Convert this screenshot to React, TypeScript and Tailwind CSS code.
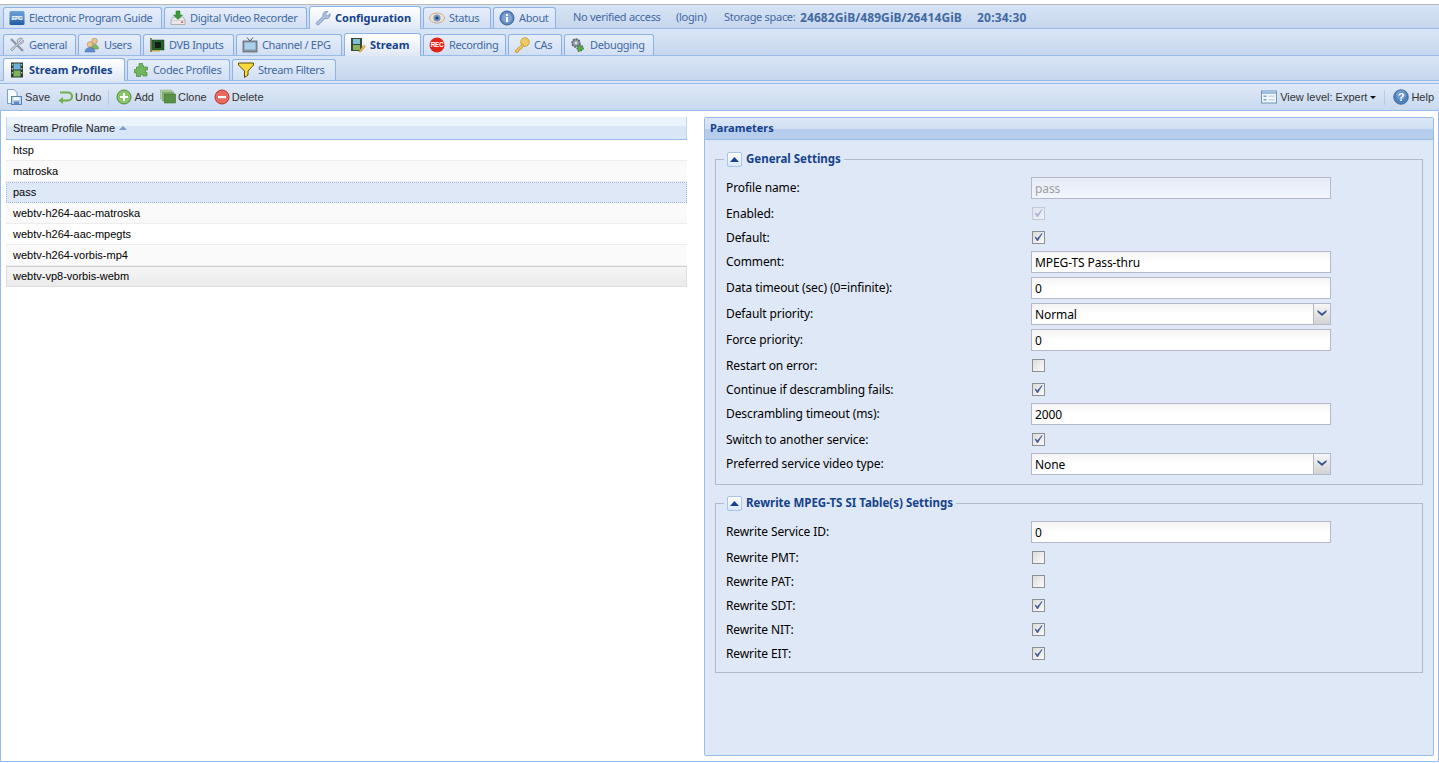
import React from "react";

function I({ children }: { children: React.ReactNode }) {
  return <svg width="16" height="16" viewBox="0 0 16 16" className="shrink-0">{children}</svg>;
}

const Icons: Record<string, React.ReactNode> = {
  epg: <I><defs><linearGradient id="epgg" x1="0" y1="0" x2="0" y2="1"><stop offset="0" stopColor="#6ea5dd" /><stop offset="1" stopColor="#1f5aa0" /></linearGradient></defs><rect x="0.500" y="1" width="15" height="14" rx="1.500" fill="url(#epgg)" /><rect x="1.500" y="5.500" width="13" height="4.500" fill="#dbe9f7" opacity="0.250" /><text x="8" y="10" textAnchor="middle" fontSize="5.500" fontWeight="700" fontStyle="italic" fill="#fff" fontFamily="Liberation Sans, sans-serif">EPG</text></I>,
  dvr: <I><path d="M1 10 L3 7 H13 L15 10 V14.500 H1Z" fill="#e9e9e9" stroke="#999" strokeWidth="0.700" /><path d="M1 10.500H15" stroke="#bbb" strokeWidth="0.500" /><rect x="11" y="11.500" width="2.200" height="1.200" fill="#d33" /><path d="M6 1h4v4h2.500L8 9.500 3.500 5H6z" fill="#3c9a35" stroke="#2a7525" strokeWidth="0.500" /></I>,
  config: <I><path d="M15 3.500 L12.500 6 L10.500 4 L13 1.500 A4 4 0 0 0 8 6.500 L1.500 12.500 A1.600 1.600 0 0 0 3.700 14.700 L10 8.600 A4 4 0 0 0 15 3.500Z" fill="#a9c0de" stroke="#6d8bb5" strokeWidth="0.700" /></I>,
  status: <I><ellipse cx="8" cy="8" rx="7.500" ry="5" fill="#f3e4d2" stroke="#b98f68" strokeWidth="0.700" /><circle cx="8" cy="8" r="3.600" fill="#6f97c8" /><circle cx="8" cy="8" r="1.600" fill="#24456f" /></I>,
  about: <I><circle cx="8" cy="8" r="7" fill="#5e88bf" stroke="#3e6497" /><circle cx="8" cy="8" r="5" fill="#7ea4d3" /><rect x="7" y="7" width="2" height="5" fill="#fff" /><rect x="7" y="4" width="2" height="2" fill="#fff" /></I>,
  general: <I><path d="M2 2 L14 14" stroke="#8d99a6" strokeWidth="2.400" /><path d="M13.500 1.500 L10.500 4.500 L11.500 5.500 L14.500 3 A3.500 3.500 0 0 1 10 7 L3 14 L1.500 12.500 L8.500 6 A3.500 3.500 0 0 1 13.500 1.500Z" fill="#c4ccd4" stroke="#7b8794" strokeWidth="0.600" /></I>,
  users: <I><circle cx="10.500" cy="4" r="2.800" fill="#e9c28e" stroke="#a97f4b" strokeWidth="0.500" /><path d="M6.500 12c0-3 2-4.500 4-4.500s4 1.500 4 4.500z" fill="#7db563" stroke="#5c8d44" strokeWidth="0.500" /><circle cx="6" cy="7.500" r="2.800" fill="#eac497" stroke="#a97f4b" strokeWidth="0.500" /><path d="M1 15c0-3 2.500-4.500 5-4.500S11 12 11 15z" fill="#5f8fd0" stroke="#436da6" strokeWidth="0.500" /></I>,
  dvb: <I><rect x="1" y="1" width="2" height="14" fill="#8a8a5e" /><rect x="3" y="3" width="12" height="10" fill="#25602f" stroke="#17401f" strokeWidth="0.500" /><rect x="6" y="5" width="6" height="6" fill="#141d16" /><rect x="3" y="13" width="8" height="1.500" fill="#c9a94b" /></I>,
  channel: <I><path d="M5 0.500 L8 4 L11 0.500" stroke="#555" fill="none" /><rect x="1" y="4" width="14" height="11" fill="#8a94a0" stroke="#4f5761" strokeWidth="0.700" /><rect x="2.500" y="5.500" width="11" height="7" fill="#a8d2ee" /></I>,
  stream: <I><rect x="1" y="1" width="11" height="13" fill="#3a4a3a" /><rect x="3" y="2" width="7" height="5" fill="#7fbfdc" /><rect x="3" y="8" width="7" height="5" fill="#86b45a" /><path d="M9 14 L14 8 L15.500 9.500 L10.500 15 H9Z" fill="#f0b73d" stroke="#a9772a" strokeWidth="0.400" /></I>,
  recording: <I><circle cx="8" cy="8" r="7.500" fill="#e2231a" /><text x="8" y="10.300" textAnchor="middle" fontSize="6.400" fontWeight="700" fill="#fff" fontFamily="Liberation Sans, sans-serif">REC</text></I>,
  cas: <I><circle cx="11" cy="5" r="4.300" fill="#f6cd5b" stroke="#b58a25" strokeWidth="0.700" /><circle cx="12" cy="4" r="1.100" fill="#fff7d8" stroke="#b58a25" strokeWidth="0.400" /><path d="M8.500 7 L1 14 L2 15.500 L4.500 15 L5 12.800 L6.800 12.300 L10 8.800Z" fill="#f2c64f" stroke="#b58a25" strokeWidth="0.700" /></I>,
  debug: <I><circle cx="6" cy="6" r="4" fill="#8c93a0" stroke="#5d6470" strokeWidth="1.400" strokeDasharray="2 1" /><circle cx="6" cy="6" r="1.400" fill="#dfe3ea" /><circle cx="10" cy="11" r="3" fill="#9aa1ad" stroke="#5d6470" strokeWidth="1.200" strokeDasharray="1.600 1" /><path d="M8 8 L14 11.500 L8 15Z" fill="#4fb53c" stroke="#2f7f25" strokeWidth="0.500" /></I>,
  film: <I><rect x="2" y="0.500" width="12" height="15" fill="#2e3a35" /><rect x="4.500" y="1.500" width="7" height="6" fill="#6db3d8" /><rect x="4.500" y="8.500" width="7" height="6" fill="#7fb55a" /><rect x="2.800" y="2" width="1" height="1.500" fill="#ddd" /><rect x="2.800" y="6" width="1" height="1.500" fill="#ddd" /><rect x="2.800" y="10" width="1" height="1.500" fill="#ddd" /><rect x="12.200" y="2" width="1" height="1.500" fill="#ddd" /><rect x="12.200" y="6" width="1" height="1.500" fill="#ddd" /><rect x="12.200" y="10" width="1" height="1.500" fill="#ddd" /></I>,
  plugin: <I><path d="M6 1.500 H9.500 V3.500 H10.500 V5 H14.500 V8 H12.500 V10.500 H14 V14 H10 V12.500 H7.500 V14.500 H3.500 V11 H1.500 V7.500 H3.500 V5 H6Z" fill="#70b75f" stroke="#438a3c" strokeWidth="0.700" strokeLinejoin="round" /></I>,
  filter: <I><path d="M0.500 1 H15.500 V3 L10 9 V13 L6.500 15.500 V9 L0.500 3Z" fill="#f9d93c" stroke="#5f4a08" strokeWidth="1" strokeLinejoin="round" /></I>,
  save: <I><path d="M1.500 0.500 H8 L11 3.500 V14.500 H1.500Z" fill="#f8fbff" stroke="#6f95c6" strokeWidth="0.900" /><rect x="5.500" y="7.500" width="10" height="8" fill="#b9d3f0" stroke="#4f79b0" strokeWidth="0.900" /><rect x="7.500" y="8" width="6" height="3" fill="#f4f8fd" /><rect x="8" y="12.500" width="5" height="3" fill="#5f89be" /></I>,
  undo: <I><path d="M3 3.500 H11 A3.800 3.800 0 0 1 11 11.500 H5" fill="none" stroke="#6eb04b" strokeWidth="2.200" /><path d="M6 8 L1.500 11.500 L6 15Z" fill="#6eb04b" /></I>,
  add: <I><circle cx="8" cy="8" r="7" fill="#8ac56b" stroke="#4f8d38" /><rect x="7" y="4" width="2" height="8" fill="#fff" /><rect x="4" y="7" width="8" height="2" fill="#fff" /></I>,
  clone: <I><rect x="0.500" y="1" width="11" height="9" fill="#b5d3a8" stroke="#8fb284" strokeWidth="0.600" /><rect x="2.500" y="3" width="11" height="9" fill="#8cb67c" stroke="#6f9c62" strokeWidth="0.600" /><rect x="4.500" y="5" width="11" height="9" fill="#5b9146" stroke="#3e6f30" strokeWidth="0.600" /></I>,
  del: <I><circle cx="8" cy="8" r="7" fill="#ea6a62" stroke="#b3362f" /><rect x="4" y="7" width="8" height="2.200" fill="#fff" /></I>,
  view: <I><rect x="0.500" y="2" width="15" height="12" fill="#f3f7fc" stroke="#6e93c3" /><rect x="1" y="2.500" width="14" height="2.500" fill="#9fbde3" /><rect x="2.500" y="6.500" width="3" height="1.500" fill="#7ea1cf" /><rect x="2.500" y="10" width="3" height="1.500" fill="#7ea1cf" /><rect x="7.500" y="6.500" width="6" height="1.500" fill="#c7d6ea" /><rect x="7.500" y="10" width="6" height="1.500" fill="#c7d6ea" /></I>,
  help: <I><circle cx="8" cy="8" r="7.300" fill="#4f81bd" stroke="#345f97" strokeWidth="0.800" /><circle cx="8" cy="6" r="5" fill="#8cb2de" opacity="0.500" /><text x="8" y="12" textAnchor="middle" fontSize="11" fontWeight="700" fill="#fff" fontFamily="Liberation Sans, sans-serif">?</text></I>,
};

function Tab({ icon, label, width, active }: { icon: string; label: string; width: string; active?: boolean }) {
  return (
    <div className={`flex items-center gap-[3px] pl-[5px] rounded-t-[3px] border border-[#8db2e3] border-b-0 ${width} ${active ? "h-[23px] bg-gradient-to-b from-[#ffffff] to-[#dfe8f6] text-[#15428b] font-bold -mb-px" : "h-[21px] bg-gradient-to-b from-[#e6eefa] to-[#d2dff3] text-[#416aa3] tracking-[-0.35px]"}`}>
      {Icons[icon]}
      <span className="pl-[1px] whitespace-nowrap">{label}</span>
    </div>
  );
}

function TabBar({ children, h }: { children: React.ReactNode; h: string }) {
  return (
    <div className={`flex items-end gap-[2px] pl-[3px] ${h} border-b border-[#99bbe8] bg-gradient-to-b from-[#d7e4f6] to-[#c6d6ec] text-[11px]`}>
      {children}
    </div>
  );
}

function ToolBtn({ icon, label }: { icon: string; label: string }) {
  return (
    <div className="flex items-center gap-[2px] text-[#333] whitespace-nowrap">
      {Icons[icon]}
      <span>{label}</span>
    </div>
  );
}

const profiles = ["htsp", "matroska", "pass", "webtv-h264-aac-matroska", "webtv-h264-aac-mpegts", "webtv-h264-vorbis-mp4", "webtv-vp8-vorbis-webm"];

function Row({ name, i }: { name: string; i: number }) {
  const cls =
    i === 2
      ? "bg-[#dfe8f6] border border-dotted border-[#a3bae9] pl-[6px]"
      : i === 6
      ? "bg-gradient-to-b from-[#f5f5f5] to-[#ebebeb] border border-[#dedede] border-t-[#d0d0d0] pl-[6px]"
      : i % 2 === 1
      ? "bg-[#fafafa] border-b border-[#ededed] pl-[7px] pr-px"
      : "bg-white border-b border-[#ededed] pl-[7px] pr-px";
  return <div className={`h-[21px] flex items-center text-[11px] text-black ${cls}`} style={{ fontFamily: "'Liberation Sans', Arial, sans-serif" }}>{name}</div>;
}

function Label({ children, nudge }: { children: React.ReactNode; nudge?: boolean }) {
  return <div className={`w-[305px] shrink-0 text-black ${nudge ? "pt-[1px]" : ""}`}>{children}</div>;
}

function TextRow({ label, value, disabled }: { label: string; value: string; disabled?: boolean }) {
  return (
    <div className="flex items-center h-[26px]">
      <Label>{label}</Label>
      <div className={`w-[300px] h-[22px] border border-[#b5b8c8] flex items-center pl-[3px] pt-[1px] ${disabled ? "bg-gradient-to-b from-[#e6ebf6] to-[#f2f5fc] text-[#a0a0a0]" : "bg-gradient-to-b from-[#f4f4f4] via-[#ffffff] to-[#ffffff] text-black"}`}>{value}</div>
    </div>
  );
}

function SelectRow({ label, value }: { label: string; value: string }) {
  return (
    <div className="flex items-center h-[26px]">
      <Label>{label}</Label>
      <div className="w-[300px] h-[22px] border border-[#b5b8c8] flex items-stretch bg-gradient-to-b from-[#f4f4f4] via-[#ffffff] to-[#ffffff] text-black">
        <div className="flex-1 flex items-center pl-[3px] pt-[1px]">{value}</div>
        <div className="w-[17px] border-l border-[#b5b8c8] bg-gradient-to-b from-[#f7f7f7] to-[#d2d2d2] flex items-start justify-center pt-[6px]">
          <svg width="10" height="6" viewBox="0 0 10 6"><path d="M0.500 0 L5 3.500 L9.500 0 V2 L5 6 L0.500 2Z" fill="#2f4f8f" /></svg>
        </div>
      </div>
    </div>
  );
}

function CheckRow({ label, checked, disabled }: { label: string; checked?: boolean; disabled?: boolean }) {
  return (
    <div className="flex items-center h-[24px]">
      <Label nudge>{label}</Label>
      <div className={`ml-px w-[13px] h-[13px] border flex items-center justify-center bg-gradient-to-br ${disabled ? "border-[#c3c8d4] from-[#dfe5f2] to-[#eef1f8]" : "border-[#8f8f8f] from-[#dcdcdc] to-[#fbfbfb]"}`}>
        {checked && (
          <svg width="11" height="11" viewBox="0 0 11 11"><path d="M2 5 L4.500 9 L9 1.500 L4.600 6.500Z" fill={disabled ? "#a9b3cc" : "#4a5f9c"} stroke={disabled ? "#a9b3cc" : "#4a5f9c"} strokeWidth="0.900" /></svg>
        )}
      </div>
    </div>
  );
}

function Group({ title, h, children }: { title: string; h: string; children: React.ReactNode }) {
  return (
    <fieldset className={`mx-[10px] border border-[#b5b8c8] pl-[10px] ${h}`}>
      <legend className="-ml-[2px] flex items-center h-[16px] pr-[3px] pl-[3px] text-[#15428b] font-bold text-[11.5px] tracking-normal">
        <span className="w-[15px] h-[15px] mr-[4px] rounded-[2px] border border-[#a9c4ea] bg-gradient-to-b from-[#ffffff] to-[#dce8f8] flex items-center justify-center">
          <svg width="9" height="5" viewBox="0 0 9 5"><path d="M4.500 0 L9 5 H0Z" fill="#15428b" /></svg>
        </span>
        {title}
      </legend>
      {children}
    </fieldset>
  );
}

export default function App() {
  return (
    <div className="w-[1439px] h-[763px] overflow-hidden bg-white flex flex-col pt-[4px]" style={{ fontFamily: "'Noto Sans', Tahoma, sans-serif" }}>
      <div className="border-t border-[#b8b8b8]" />
      <TabBar h="h-[24px]">
        <Tab icon="epg" label="Electronic Program Guide" width="w-[159px]" />
        <Tab icon="dvr" label="Digital Video Recorder" width="w-[143px]" />
        <Tab icon="config" label="Configuration" width="w-[112px]" active />
        <Tab icon="status" label="Status" width="w-[68px]" />
        <Tab icon="about" label="About" width="w-[63px]" />
        <div className="flex items-center h-[21px] text-[#416aa3] whitespace-nowrap tracking-[-0.3px]">
          <span className="ml-[15px] w-[103px]">No verified access</span>
          <span className="w-[48px]">(login)</span>
          <span className="w-[76px]">Storage space:</span>
          <span className="font-bold w-[177px] text-[12px] tracking-[0.08px]">24682GiB/489GiB/26414GiB</span>
          <span className="font-bold text-[12px] tracking-[0.2px]">20:34:30</span>
        </div>
      </TabBar>
      <div className="h-[4px] bg-[#d7e4f6]" />
      <TabBar h="h-[23px]">
        <Tab icon="general" label="General" width="w-[73px]" />
        <Tab icon="users" label="Users" width="w-[63px]" />
        <Tab icon="dvb" label="DVB Inputs" width="w-[91px]" />
        <Tab icon="channel" label="Channel / EPG" width="w-[106px]" />
        <Tab icon="stream" label="Stream" width="w-[77px]" active />
        <Tab icon="recording" label="Recording" width="w-[83px]" />
        <Tab icon="cas" label="CAs" width="w-[54px]" />
        <Tab icon="debug" label="Debugging" width="w-[90px]" />
      </TabBar>
      <div className="h-[3px] bg-[#d7e4f6]" />
      <TabBar h="h-[22px]">
        <Tab icon="film" label="Stream Profiles" width="w-[122px]" active />
        <Tab icon="plugin" label="Codec Profiles" width="w-[103px]" />
        <Tab icon="filter" label="Stream Filters" width="w-[104px]" />
      </TabBar>
      <div className="h-[2px] bg-[#d7e4f6]" />
      <div className="h-[28px] flex items-center pl-[6px] pr-[5px] border-y border-[#99bbe8] bg-gradient-to-b from-[#dfe9f7] to-[#c9d9ef] text-[11px]" style={{ fontFamily: "'Liberation Sans', Arial, sans-serif" }}>
        <div className="flex items-center gap-[3px] text-[#333]">{Icons.save}<span>Save</span></div>
        <div className="ml-[7px]"><ToolBtn icon="undo" label="Undo" /></div>
        <div className="mx-[7px] w-px h-[15px] bg-[#b5cbe8]" />
        <ToolBtn icon="add" label="Add" />
        <div className="ml-[6px]"><ToolBtn icon="clone" label="Clone" /></div>
        <div className="ml-[7px]"><ToolBtn icon="del" label="Delete" /></div>
        <div className="ml-auto flex items-center">
          <div className="flex items-center gap-[3px] text-[#333]">
            {Icons.view}
            <span>View level: Expert</span>
            <svg width="6" height="3" viewBox="0 0 6 3"><path d="M0 0H6L3 3Z" fill="#111" /></svg>
          </div>
          <div className="ml-[8px] mr-[8px] w-px h-[15px] bg-[#b5cbe8]" />
          <ToolBtn icon="help" label="Help" />
        </div>
      </div>
      <div className="flex-1 flex min-h-0 border-l border-r border-b border-[#99bbe8] mb-px pt-[6px] pb-[5px] pl-[5px] pr-[4px]">
        <div className="w-[681px] shrink-0">
          <div className="h-[23px] flex border-b border-[#99bbe8] bg-[linear-gradient(#eaf2fc_0,#eaf2fc_9px,#d9e6f8_9px,#d9e6f8_100%)] text-[11px]" style={{ fontFamily: "'Liberation Sans', Arial, sans-serif" }}>
            <div className="flex-1 flex items-center gap-[4px] pl-[6px] border-l border-[#c5d7ef] border-r text-[#222]">
              Stream Profile Name
              <svg width="8" height="4" viewBox="0 0 8 4"><path d="M4 0L8 4H0Z" fill="#7a9bcf" /></svg>
            </div>
          </div>
          {profiles.map((p, i) => <Row key={p} name={p} i={i} />)}
        </div>
        <div className="ml-[17px] flex-1 flex flex-col border border-[#99bbe8] rounded-[2px] bg-[#dfe8f6] text-[12px] tracking-[-0.1px]">
          <div className="h-[22px] flex items-center pl-[5px] border-b border-[#99bbe8] bg-[linear-gradient(#dbe7f7_0,#d0dff3_11px,#b5ccec_11px,#b7ceed_100%)] text-[#15428b] font-bold text-[11px] tracking-normal shrink-0">Parameters</div>
          <div className="pt-[11px] flex flex-col gap-[10px]">
            <Group title="General Settings" h="h-[334px]">
              <div className="pt-[8px]">
                <TextRow label="Profile name:" value="pass" disabled />
                <CheckRow label="Enabled:" checked disabled />
                <CheckRow label="Default:" checked />
                <TextRow label="Comment:" value="MPEG-TS Pass-thru" />
                <TextRow label="Data timeout (sec) (0=infinite):" value="0" />
                <SelectRow label="Default priority:" value="Normal" />
                <TextRow label="Force priority:" value="0" />
                <CheckRow label="Restart on error:" />
                <CheckRow label="Continue if descrambling fails:" checked />
                <TextRow label="Descrambling timeout (ms):" value="2000" />
                <CheckRow label="Switch to another service:" checked />
                <SelectRow label="Preferred service video type:" value="None" />
              </div>
            </Group>
            <Group title="Rewrite MPEG-TS SI Table(s) Settings" h="h-[178px]">
              <div className="pt-[8px]">
                <TextRow label="Rewrite Service ID:" value="0" />
                <CheckRow label="Rewrite PMT:" />
                <CheckRow label="Rewrite PAT:" />
                <CheckRow label="Rewrite SDT:" checked />
                <CheckRow label="Rewrite NIT:" checked />
                <CheckRow label="Rewrite EIT:" checked />
              </div>
            </Group>
          </div>
        </div>
      </div>
    </div>
  );
}
